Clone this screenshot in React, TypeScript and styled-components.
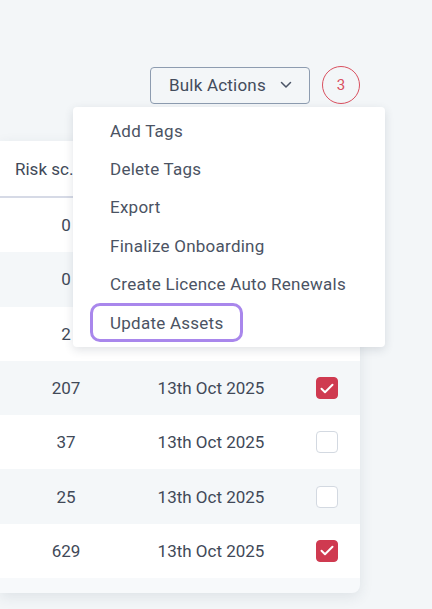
import React from "react";
import styled, { createGlobalStyle } from "styled-components";

const GlobalStyle = createGlobalStyle`
body {
  margin: 0;
  background: #f3f6f8;
  font-family: Roboto, "Liberation Sans", sans-serif;
  color: #414958;
}
`;

const Page = styled.div`
width: 360px;
padding-top: 66px;
padding-bottom: 17px;
`;

const Toolbar = styled.div`
display: flex;
justify-content: flex-end;
align-items: center;
gap: 12px;
`;

const ActionsWrap = styled.div`
position: relative;
`;

const BulkButton = styled.button`
display: flex;
align-items: center;
gap: 14px;
box-sizing: border-box;
width: 160px;
height: 37px;
padding: 0 0 0 18px;
background: transparent;
border: 1px solid #8d9cb0;
border-radius: 4px;
font-family: inherit;
font-size: 17px;
letter-spacing: 0.2px;
color: #434c5c;
`;

const Badge = styled.div`
display: flex;
align-items: center;
justify-content: center;
box-sizing: border-box;
width: 38px;
height: 38px;
border: 1px solid #d9505f;
border-radius: 50%;
color: #d9505f;
font-size: 15px;
`;

const Menu = styled.ul`
position: absolute;
z-index: 2;
top: 40px;
left: -77px;
box-sizing: border-box;
width: 312px;
margin: 0;
padding: 5px 0 5px;
list-style: none;
background: #fff;
border-radius: 4px;
box-shadow: 0 3px 10px rgba(40, 55, 75, 0.14);
`;

const MenuItem = styled.li<{ $focused?: boolean }>`
display: flex;
align-items: center;
box-sizing: border-box;
width: fit-content;
height: 38.4px;
margin-left: 17px;
padding: 0 17px;
border-radius: 10px;
border: 3px solid ${(p) => (p.$focused ? "#a987ec" : "transparent")};
font-size: 17px;
letter-spacing: 0.25px;
color: #4b5363;
white-space: nowrap;
`;

const Card = styled.div`
margin-top: 37px;
background: #f7f9fb;
border-radius: 0 8px 8px 0;
padding-bottom: 15px;
box-shadow: 0 4px 14px rgba(40, 55, 75, 0.1);
overflow: hidden;
`;

const Row = styled.div<{ $shade?: boolean }>`
display: grid;
grid-template-columns: 132px 158px 1fr;
align-items: center;
height: 54.3px;
background: ${(p) => (p.$shade ? "#f4f7f9" : "#fff")};
font-size: 17px;
color: #414958;
`;

const HeaderRow = styled(Row)`
height: 55px;
border-bottom: 2px solid #d6dae6;
background: #fff;
`;

const HeadCell = styled.div`
max-width: 70px;
padding-left: 15px;
overflow: hidden;
white-space: nowrap;
text-overflow: ellipsis;
`;

const Cell = styled.div`
text-align: center;
`;

const CheckCell = styled.div`
display: flex;
justify-content: center;
padding-left: 4px;
`;

const Box = styled.span<{ $checked?: boolean }>`
display: flex;
align-items: center;
justify-content: center;
box-sizing: border-box;
width: 22px;
height: 22px;
border-radius: 4px;
background: ${(p) => (p.$checked ? "#cf3a50" : "#fff")};
border: 1px solid ${(p) => (p.$checked ? "#cf3a50" : "#d3d9e1")};
`;

const Chevron = () => (
  <svg width="12" height="8" viewBox="0 0 12 8" fill="none">
    <path d="M1.5 1.5 6 6l4.5-4.5" stroke="#4a5466" strokeWidth="1.5" strokeLinecap="round" strokeLinejoin="round" />
  </svg>
);

const Tick = () => (
  <svg width="14" height="11" viewBox="0 0 14 11" fill="none">
    <path d="M1.5 5.8 5 9.2 12.5 1.8" stroke="#fff" strokeWidth="2" strokeLinecap="round" strokeLinejoin="round" />
  </svg>
);

const menuItems = [
  "Add Tags",
  "Delete Tags",
  "Export",
  "Finalize Onboarding",
  "Create Licence Auto Renewals",
  "Update Assets",
];

const rows = [
  { score: 0, checked: false },
  { score: 0, checked: false },
  { score: 2, checked: false },
  { score: 207, checked: true },
  { score: 37, checked: false },
  { score: 25, checked: false },
  { score: 629, checked: true },
];

export default function App() {
  return (
    <Page>
      <GlobalStyle />
      <Toolbar>
        <ActionsWrap>
          <BulkButton>
            Bulk Actions
            <Chevron />
          </BulkButton>
          <Menu>
            {menuItems.map((m) => (
              <MenuItem key={m} $focused={m === "Update Assets"}>
                {m}
              </MenuItem>
            ))}
          </Menu>
        </ActionsWrap>
        <Badge>3</Badge>
      </Toolbar>
      <Card>
        <HeaderRow>
          <HeadCell>Risk score</HeadCell>
          <div />
          <div />
        </HeaderRow>
        {rows.map((r, i) => (
          <Row key={i} $shade={i % 2 === 1}>
            <Cell>{r.score}</Cell>
            <Cell>13th Oct 2025</Cell>
            <CheckCell>
              <Box $checked={r.checked}>{r.checked && <Tick />}</Box>
            </CheckCell>
          </Row>
        ))}
      </Card>
    </Page>
  );
}
